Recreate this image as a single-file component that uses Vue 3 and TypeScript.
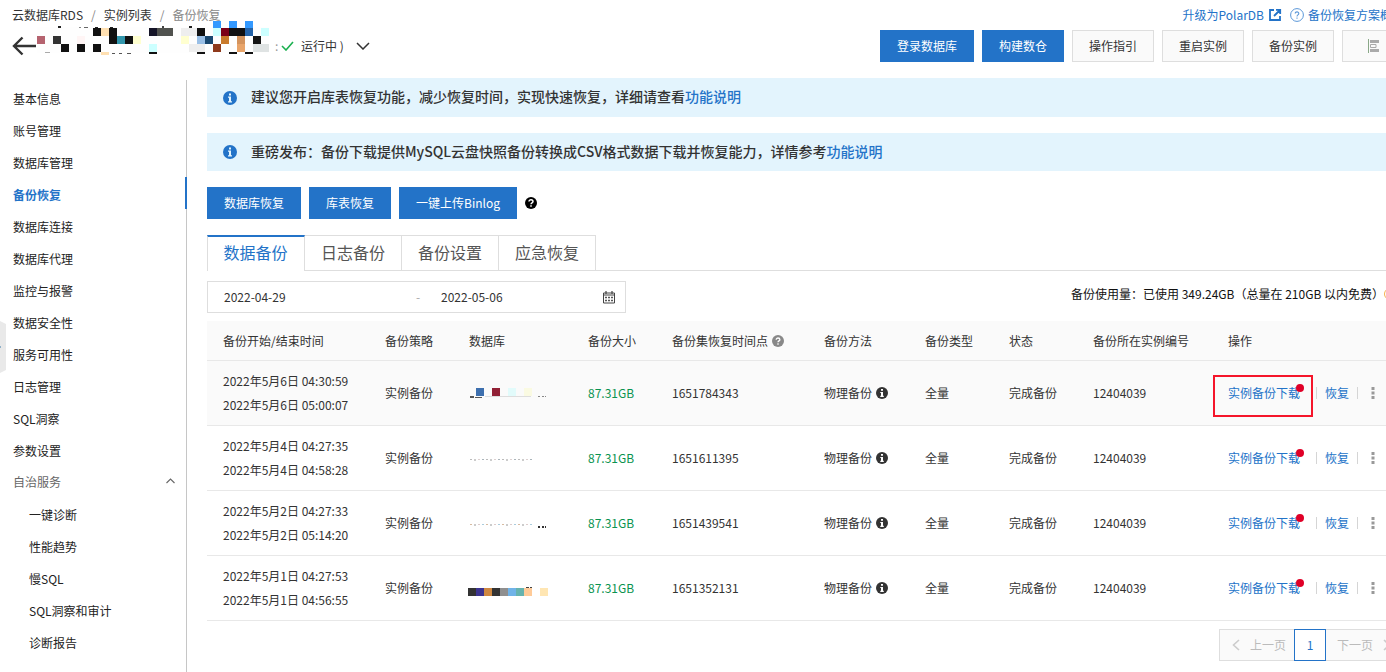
<script setup lang="ts">
import { ref } from 'vue'

type Cell = [x: number, y: number, w: number, h: number, fill: string]

interface Backup {
  start: string
  end: string
  point: string
  mask: Cell[]
  marked?: boolean
}

const navItems = [
  '基本信息', '账号管理', '数据库管理', '备份恢复', '数据库连接', '数据库代理',
  '监控与报警', '数据安全性', '服务可用性', '日志管理', 'SQL洞察', '参数设置',
]
const subItems = ['一键诊断', '性能趋势', '慢SQL', 'SQL洞察和审计', '诊断报告']
const activeNav = ref('备份恢复')
const groupOpen = ref(true)

const tabs = ['数据备份', '日志备份', '备份设置', '应急恢复']
const activeTab = ref('数据备份')

const dateFrom = ref('2022-04-29')
const dateTo = ref('2022-05-06')

const titleMask: Cell[] = [
  [0, 6, 232, 26, '#fefefe'],
  [176, 0, 8, 7, '#3399ff'], [192, 0, 8, 7, '#3399ff'], [208, 0, 8, 7, '#3399ff'],
  [21, 5, 3, 2, '#222'], [42, 6, 2, 1, '#888'], [47, 6, 4, 1, '#666'], [58, 6, 3, 1, '#222'], [73, 6, 3, 1, '#222'], [125, 5, 2, 2, '#444'], [152, 5, 3, 2, '#222'],
  [56, 7, 8, 8, '#111'], [64, 7, 8, 8, '#ffe0b2'], [72, 7, 8, 8, '#111'], [112, 7, 8, 8, '#151528'],
  [120, 7, 16, 8, '#50524e'], [144, 7, 16, 8, '#eeeeee'], [160, 7, 8, 8, '#111'], [176, 7, 8, 8, '#ccffff'],
  [184, 7, 8, 8, '#7b0018'], [192, 7, 16, 8, '#111'], [208, 7, 8, 8, '#2463a8'], [224, 7, 8, 8, '#ccffff'],
  [0, 15, 8, 8, '#b5636f'], [16, 15, 8, 8, '#333'], [40, 15, 8, 8, '#fff5f5'], [72, 15, 8, 8, '#111'],
  [80, 15, 8, 8, '#3296ac'], [88, 15, 8, 8, '#111'], [96, 15, 8, 8, '#ffffd0'], [144, 15, 8, 8, '#ffffd0'],
  [160, 15, 8, 8, '#99bfe6'], [168, 15, 8, 8, '#194870'], [184, 15, 8, 8, '#c97a2b'], [200, 15, 8, 8, '#d4935c'], [216, 15, 8, 8, '#151515'],
  [24, 23, 8, 8, '#111'], [40, 23, 8, 8, '#111'], [56, 23, 8, 8, '#111'], [112, 23, 8, 8, '#ccffff'],
  [152, 23, 16, 8, '#eeeeee'], [176, 23, 8, 8, '#8f3a1c'], [200, 23, 8, 8, '#e8a469'], [216, 23, 16, 8, '#dfe3e3'],
  [64, 31, 8, 3, '#ffe0b2'], [112, 31, 8, 2, '#111'], [160, 31, 8, 2, '#111'], [192, 31, 8, 2, '#111'], [208, 31, 8, 2, '#111'],
  [8, 31, 5, 1, '#aaa'], [75, 32, 3, 1, '#555'], [82, 32, 3, 1, '#555'], [90, 32, 4, 1, '#555'],
]

const dotted = (colors: string[], y: number): Cell[] =>
  Array.from({ length: 16 }, (_, i): Cell => [2 + i * 4, y, 2, i % 4 === 1 ? 2 : 1, colors[i % colors.length]])

const rows: Backup[] = [
  {
    start: '2022年5月6日 04:30:59', end: '2022年5月6日 05:00:07', point: '1651784343', marked: true,
    mask: [
      [2, 12, 4, 2, '#555'], [7, 13, 7, 1, '#555'], [8, 4, 8, 8, '#3d6fae'], [24, 4, 8, 8, '#912035'],
      [40, 4, 8, 8, '#e2fbfb'], [56, 4, 8, 8, '#fafae2'], [17, 12, 46, 1, '#dddddd'],
      [70, 12, 2, 1, '#888'], [74, 12, 2, 1, '#888'], [77, 12, 1, 1, '#888'],
    ],
  },
  {
    start: '2022年5月4日 04:27:35', end: '2022年5月4日 04:58:28', point: '1651611395',
    mask: dotted(['#bbbbbb', '#cccccc', '#ddd0d0', '#aab5bb'], 10),
  },
  {
    start: '2022年5月2日 04:27:33', end: '2022年5月2日 05:14:20', point: '1651439541',
    mask: [
      ...dotted(['#d8bba0', '#cccccc', '#ddcccc', '#aaccdd'], 10),
      [70, 12, 2, 2, '#333'], [74, 12, 2, 2, '#333'], [77, 12, 1, 2, '#333'],
    ],
  },
  {
    start: '2022年5月1日 04:27:53', end: '2022年5月1日 04:56:55', point: '1651352131',
    mask: [
      [0, 9, 8, 8, '#333'], [8, 9, 8, 8, '#3c3490'], [16, 9, 8, 8, '#cf8841'], [24, 9, 8, 8, '#333'],
      [32, 9, 8, 8, '#8f8f8f'], [40, 9, 8, 8, '#70b3e8'], [48, 9, 8, 8, '#66b3ae'], [56, 9, 8, 8, '#ffcb98'],
      [72, 9, 8, 8, '#ffe6b3'], [58, 8, 3, 1, '#444'], [62, 8, 2, 1, '#444'],
    ],
  },
]
</script>

<template>
  <div class="page">
    <div class="canvas">
      <header class="top">
        <div class="crumb-row">
          <nav class="crumbs" aria-label="面包屑">
            <a href="#">云数据库RDS</a><i>/</i><a href="#">实例列表</a><i>/</i><span>备份恢复</span>
          </nav>
          <div class="top-links">
            <a href="#">升级为PolarDB
              <svg width="14" height="14" viewBox="0 0 14 14"><path d="M6 2H2v10h10V8M8 1.8h4.2V6M12 2L6 8" fill="none" stroke="#2373c8" stroke-width="1.8" /></svg>
            </a>
            <a href="#">
              <svg width="14" height="14" viewBox="0 0 14 14"><circle cx="7" cy="7" r="6.4" fill="none" stroke="#5b97d8" /><path d="M5.2 5.6c0-2.4 3.7-2.3 3.6 0C8.8 7 7 6.900 7 8.500M7 9.600v1.200" fill="none" stroke="#5b97d8" stroke-width="1.100" /></svg>
              备份恢复方案概览</a>
          </div>
        </div>
        <div class="title-row">
          <button class="bare" aria-label="返回">
            <svg width="25" height="20" viewBox="0 0 25 20"><path d="M24 10H2M10.500 1.500L2 10l8.500 8.500" fill="none" stroke="#333" stroke-width="2.400" /></svg>
          </button>
          <div class="title-mask">
            <svg width="232" height="35" viewBox="0 0 232 35" shape-rendering="crispEdges">
              <rect v-for="(c, i) in titleMask" :key="i" :x="c[0]" :y="c[1]" :width="c[2]" :height="c[3]" :fill="c[4]" />
            </svg>
          </div>
          <span class="colon">:</span>
          <svg class="ok" width="13" height="10" viewBox="0 0 13 10"><path d="M1 5l4 4 7-8" fill="none" stroke="#1bb050" stroke-width="1.600" /></svg>
          <span class="state">运行中 )</span>
          <button class="bare" aria-label="展开">
            <svg width="14" height="8" viewBox="0 0 14 8"><path d="M1 1l6 6 6-6" fill="none" stroke="#333" stroke-width="1.500" /></svg>
          </button>
          <div class="top-actions">
            <button class="btn primary">登录数据库</button>
            <button class="btn primary">构建数仓</button>
            <button class="btn">操作指引</button>
            <button class="btn">重启实例</button>
            <button class="btn">备份实例</button>
            <button class="btn" aria-label="任务列表">
              <svg width="14" height="14" viewBox="0 0 14 14"><path d="M1.500 0v14" stroke="#8aa888" /><path d="M3 1h9v3H3zM3 10h9v3H3z" fill="#aaa" /><path d="M3.500 5.500H9v3H3.500z" fill="none" stroke="#aaa" /></svg>
            </button>
          </div>
        </div>
      </header>

      <div class="body">
        <aside class="side">
          <a
            v-for="item in navItems" :key="item" href="#" class="nav"
            :class="{ active: item === activeNav }" @click.prevent="activeNav = item"
          >{{ item }}</a>
          <button class="nav group" :aria-expanded="groupOpen" @click="groupOpen = !groupOpen">
            自治服务
            <svg width="9" height="6" viewBox="0 0 9 6"><path d="M.5 5l4-4 4 4" fill="none" stroke="#666" stroke-width="1.100" /></svg>
          </button>
          <template v-if="groupOpen">
            <a v-for="item in subItems" :key="item" href="#" class="nav sub" @click.prevent="activeNav = item">{{ item }}</a>
          </template>
        </aside>

        <main class="main">
          <div class="notices">
            <p class="notice">
              <svg width="14" height="14" viewBox="0 0 14 14"><circle cx="7" cy="7" r="7" fill="#2373c8" /><path d="M6 2.500h2v2H6zM5 5.600h3v4.600h1v1.200H5v-1.200h1V6.800H5z" fill="#e3f4fd" /></svg>
              <span>建议您开启库表恢复功能，减少恢复时间，实现快速恢复，详细请查看<a href="#">功能说明</a></span>
            </p>
            <p class="notice">
              <svg width="14" height="14" viewBox="0 0 14 14"><circle cx="7" cy="7" r="7" fill="#2373c8" /><path d="M6 2.500h2v2H6zM5 5.600h3v4.600h1v1.200H5v-1.200h1V6.800H5z" fill="#e3f4fd" /></svg>
              <span>重磅发布：备份下载提供MySQL云盘快照备份转换成CSV格式数据下载并恢复能力，详情参考<a href="#">功能说明</a></span>
            </p>
          </div>

          <div class="actions">
            <button class="btn primary">数据库恢复</button>
            <button class="btn primary">库表恢复</button>
            <button class="btn primary">一键上传Binlog</button>
            <svg width="12" height="12" viewBox="0 0 12 12"><circle cx="6" cy="6" r="6" fill="#000" /><path d="M4 4.600c0-2.400 4-2.300 4 0C8 6 6 5.800 6 7.300M6 8.300v1.500" fill="none" stroke="#fff" stroke-width="1.500" /></svg>
          </div>

          <div class="tabs" role="tablist">
            <button
              v-for="tab in tabs" :key="tab" role="tab" class="tab" :class="{ active: tab === activeTab }"
              :aria-selected="tab === activeTab" @click="activeTab = tab"
            >{{ tab }}</button>
          </div>

          <div class="filter">
            <div class="range">
              <input v-model="dateFrom" type="text" aria-label="开始日期">
              <span>-</span>
              <input v-model="dateTo" type="text" aria-label="结束日期">
              <svg width="12" height="13" viewBox="0 0 12 13"><path d="M.5 2h11v10H.5zM0 4h12" fill="none" stroke="#444" /><path d="M3 0v3M9 0v3" stroke="#444" stroke-width="1.200" /><path d="M2 6.500h8M2 9.500h8" stroke="#555" stroke-width="1.500" stroke-dasharray="2 1" /></svg>
            </div>
            <div class="usage">
              <span>备份使用量：已使用 349.24GB（总量在 210GB 以内免费）</span>
              <svg width="12" height="12" viewBox="0 0 12 12"><circle cx="6" cy="6" r="5.500" fill="none" stroke="#f5b04d" /><path d="M6 3v4M6 8v1" stroke="#f5b04d" /></svg>
            </div>
          </div>

          <table class="grid">
            <colgroup>
              <col class="c-time"><col class="c-s"><col class="c-db"><col class="c-s"><col class="c-point">
              <col class="c-way"><col class="c-s"><col class="c-s"><col class="c-id"><col>
            </colgroup>
            <thead>
              <tr>
                <th>备份开始/结束时间</th><th>备份策略</th><th>数据库</th><th>备份大小</th>
                <th>
                  <span class="with-icon">备份集恢复时间点
                    <svg width="12" height="12" viewBox="0 0 12 12"><circle cx="6" cy="6" r="6" fill="#888" /><path d="M4.200 4.700c0-2.300 3.700-2.200 3.700 0C7.900 6 6 5.800 6 7.200M6 8.200v1.500" fill="none" stroke="#fff" stroke-width="1.300" /></svg>
                  </span>
                </th>
                <th>备份方法</th><th>备份类型</th><th>状态</th><th>备份所在实例编号</th><th>操作</th>
              </tr>
            </thead>
            <tbody>
              <tr v-for="row in rows" :key="row.point" :class="{ hover: row.marked }">
                <td>{{ row.start }}<br>{{ row.end }}</td>
                <td>实例备份</td>
                <td class="masked">
                  <svg width="80" height="18" viewBox="0 0 80 18" shape-rendering="crispEdges">
                    <rect v-for="(c, i) in row.mask" :key="i" :x="c[0]" :y="c[1]" :width="c[2]" :height="c[3]" :fill="c[4]" />
                  </svg>
                </td>
                <td class="size">87.31GB</td>
                <td>{{ row.point }}</td>
                <td>
                  <span class="with-icon">物理备份
                    <svg width="12" height="12" viewBox="0 0 12 12"><circle cx="6" cy="6" r="6" fill="#333" /><path d="M5 2h2v1.800H5zM4.300 4.900H7v3.900h.8V10H4.300V8.800H5V6h-.7z" fill="#fff" /></svg>
                  </span>
                </td>
                <td>全量</td>
                <td>完成备份</td>
                <td>12404039</td>
                <td>
                  <div class="ops">
                    <a href="#" class="download" :class="{ marked: row.marked }">实例备份下载</a>
                    <a href="#" class="restore">恢复</a>
                    <button class="bare" aria-label="更多">
                      <svg width="4" height="12" viewBox="0 0 4 12"><path d="M.5 0h3v3h-3zM.5 4.500h3v3h-3zM.5 9h3v3h-3z" fill="#999" /></svg>
                    </button>
                  </div>
                </td>
              </tr>
            </tbody>
          </table>

          <nav class="pager" aria-label="分页">
            <button class="page-btn" disabled>
              <svg width="8" height="12" viewBox="0 0 8 12"><path d="M7 1L1.500 6 7 11" fill="none" stroke="#ccc" stroke-width="1.600" /></svg>上一页
            </button>
            <button class="page-btn current">1</button>
            <button class="page-btn next" disabled>下一页
              <svg width="8" height="12" viewBox="0 0 8 12"><path d="M1 1l5.500 5L1 11" fill="none" stroke="#ccc" stroke-width="1.600" /></svg>
            </button>
          </nav>
        </main>
      </div>
    </div>
    <button class="handle" aria-label="收起侧栏">
      <svg width="6" height="52" viewBox="0 0 6 52"><path d="M0 0l6 3v46l-6 3z" fill="#e9e9e9" /><path d="M0 25l1 1-1 1" stroke="#8fb0c8" fill="none" /></svg>
    </button>
  </div>
</template>

<style>
body {
  margin: 0;
  background: #fff;
}
</style>

<style scoped>
.page {
  position: relative;
  min-height: 100vh;
  overflow: hidden;
  color: #333;
  font: 12px/18px "Noto Sans CJK SC", sans-serif;
}
.page * {
  box-sizing: border-box;
}
.canvas {
  display: flex;
  flex-direction: column;
  width: calc(100% + 20px);
  min-height: 100vh;
}
svg {
  display: block;
  flex: none;
}
a {
  color: #2373c8;
  text-decoration: none;
}
button,
input {
  margin: 0;
  padding: 0;
  border: 0;
  background: none;
  color: inherit;
  font: inherit;
}
button {
  cursor: pointer;
}
.top {
  padding: 0 0 16px 12px;
}
.crumb-row,
.title-row,
.top-links,
.top-links a {
  display: flex;
  align-items: center;
}
.crumb-row {
  justify-content: space-between;
  height: 30px;
}
.crumbs a {
  color: #333;
}
.crumbs span,
.crumbs i {
  color: #888;
}
.crumbs i {
  margin: 0 8px;
  font-style: normal;
}
.top-links {
  gap: 8px;
  padding-right: 2px;
}
.top-links a {
  gap: 4px;
}
.title-row {
  height: 32px;
  white-space: nowrap;
}
.title-mask {
  position: relative;
  width: 232px;
  height: 32px;
}
.title-mask svg {
  position: absolute;
  left: 0;
  bottom: 6px;
}
.colon {
  width: 12px;
  padding-left: 6px;
  color: #999;
}
.state {
  margin: 0 12px 0 7px;
}
.top-actions,
.actions {
  display: flex;
  align-items: center;
  gap: 8px;
}
.top-actions {
  margin-left: auto;
}
.btn {
  height: 32px;
  padding: 0 16px;
  border: 1px solid #dedede;
  background: #fafafa;
}
.top-actions .btn:last-child {
  padding: 0 24px;
}
.btn.primary {
  padding: 0 17px;
  border: 0;
  background: #2373c8;
  color: #fff;
}
.body {
  display: flex;
  flex: 1;
}
.side {
  flex: none;
  width: 187px;
  margin-top: 2px;
  padding-top: 1px;
  border-right: 1px solid #c6c6c6;
}
.nav {
  display: block;
  height: 32px;
  padding: 4px 0 0 13px;
  color: #222;
  line-height: 27px;
}
.nav.active {
  margin-right: -1px;
  border-right: 2px solid #2373c8;
  color: #2373c8;
  font-weight: 700;
}
.nav.group {
  display: flex;
  align-items: center;
  justify-content: space-between;
  width: 100%;
  padding: 0 11px 0 13px;
  color: #666;
}
.nav.sub {
  padding-left: 29px;
}
.main {
  flex: 1;
  min-width: 0;
  padding-left: 20px;
}
.notices {
  display: grid;
  gap: 16px;
}
.notice {
  display: flex;
  align-items: center;
  gap: 14px;
  min-height: 38px;
  margin: 0;
  padding: 0 16px;
  background: #e3f4fd;
  font-size: 14px;
  font-weight: 500;
  line-height: 20px;
}
.notice:first-child {
  min-height: 39px;
}
.notice span {
  padding-bottom: 3px;
}
.actions {
  margin: 16px 0;
}
.tabs {
  display: flex;
  height: 36px;
  border-bottom: 1px solid #dedede;
}
.tab {
  height: 35px;
  padding: 0 16px 3px;
  border-top: 1px solid #dedede;
  border-right: 1px solid #dedede;
  color: #555;
  font-size: 16px;
}
.tab.active {
  height: 36px;
  padding: 0 16px 5px 15px;
  border-top: 2px solid #2373c8;
  border-left: 1px solid #dedede;
  background: #fff;
  color: #2373c8;
}
.tab:first-child {
  width: 98px;
}
.filter {
  display: flex;
  justify-content: space-between;
  margin: 10px 0 8px;
}
.range {
  display: flex;
  align-items: center;
  width: 419px;
  height: 32px;
  padding: 0 10px 0 16px;
  border: 1px solid #dedede;
}
.range input {
  width: 162px;
  min-width: 0;
}
.range input:first-child {
  flex: 1;
}
.range span {
  width: 25px;
  color: #aaa;
}
.usage {
  display: flex;
  align-items: center;
  height: 26px;
  padding-right: 10px;
  color: #111;
}
.grid {
  width: 100%;
  border-collapse: separate;
  border-spacing: 0;
  table-layout: fixed;
}
.c-time { width: 162px; }
.c-s { width: 84px; }
.c-db { width: 119px; }
.c-point { width: 152px; }
.c-way { width: 101px; }
.c-id { width: 135px; }
th,
td {
  padding: 0 0 0 16px;
  border-bottom: 1px solid #e8e8e8;
  font-weight: 400;
  text-align: left;
  white-space: nowrap;
}
th {
  height: 40px;
  background: #fafafa;
}
td {
  height: 65px;
  line-height: 24px;
}
.hover td {
  background: #fafafa;
}
.masked {
  padding-left: 15px;
}
.size {
  color: #0a9350;
}
.with-icon {
  display: flex;
  align-items: center;
  gap: 4px;
}
.ops {
  display: flex;
  align-items: center;
}
.download {
  position: relative;
  margin-right: 16px;
}
.download::after {
  content: "";
  position: absolute;
  top: 3px;
  right: -4px;
  width: 8px;
  height: 8px;
  border-radius: 50%;
  background: #e00027;
}
.download.marked::before {
  content: "";
  position: absolute;
  inset: -6px -13px -12px -15px;
  border: 2px solid #f5152a;
}
.restore {
  margin-right: 13px;
  padding: 0 8px;
  border: 1px solid #d5d5d5;
  border-width: 0 1px;
  line-height: 12px;
}
.pager {
  display: flex;
  justify-content: flex-end;
  margin-top: 8px;
}
.page-btn {
  display: flex;
  align-items: center;
  gap: 10px;
  height: 32px;
  padding: 0 8px 0 12px;
  border: 1px solid #dedede;
  border-right: 0;
  background: #fafafa;
  color: #bbb;
}
.page-btn.current {
  width: 32px;
  justify-content: center;
  padding: 0;
  border: 1px solid #2373c8;
  background: #fff;
  color: #2373c8;
}
.page-btn.next {
  padding: 0 15px 0 11px;
  border-left: 0;
}
.handle {
  position: absolute;
  top: 321px;
  left: 0;
}
</style>
